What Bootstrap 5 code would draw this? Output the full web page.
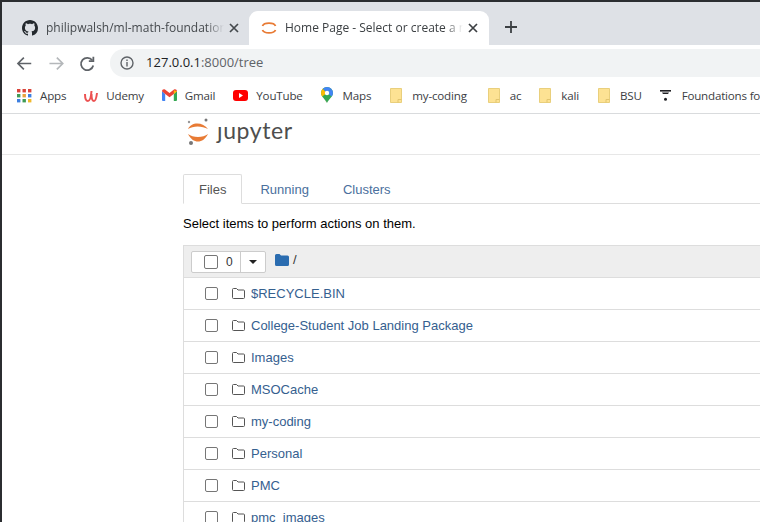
<!DOCTYPE html>
<html lang="en">
<head>
    <meta charset="UTF-8">
    <meta name="viewport" content="width=device-width, initial-scale=1.0">
    <title>Home Page - Select or create a notebook</title>
    <link href="https://cdn.jsdelivr.net/npm/bootstrap@5.3.0/dist/css/bootstrap.min.css" rel="stylesheet">
    <style>
        html, body { height: 522px; overflow: hidden; }
        body {
            background: #fff;
            font-family: "Liberation Sans", Arial, sans-serif;
            border-top: 2px solid #2b2d30;
            border-left: 2px solid #2b2d30;
        }
        .shot { width: 758px; overflow: hidden; }

        /* chrome */
        .ui-font { font-family: "Open Sans", "Noto Sans", sans-serif; }
        .tab-strip { height: 43px; background: #dee1e6; padding: 9px 0 0 1px; }
        .chrome-tab { height: 34px; padding: 0 9px 0 19px; font-size: 12px; color: #45494d; }
        .tab-one { width: 246px; }
        .tab-two { width: 240px; background: #fff; border-radius: 9px 9px 0 0; padding: 0 10px 0 12px; color: #3c4043; }
        .tab-title { flex: 1; min-width: 0; margin-right: -4px; white-space: nowrap; overflow: hidden; -webkit-mask-image: linear-gradient(to right, #000 90%, transparent); mask-image: linear-gradient(to right, #000 90%, transparent); }
        .tab-close { width: 12px; height: 12px; flex: none; }
        .new-tab { width: 14px; height: 14px; margin-left: 15px; margin-top: -2px; }
        .tool-row { height: 33px; padding: 3px 0 0 13px; }
        .tool-btn { width: 19px; height: 19px; }
        .tool-gap { margin-left: 13px; }
        .omni { height: 28px; width: 660px; margin-left: 13px; background: #f1f3f4; border-radius: 14px 0 0 14px; padding-left: 10px; font-size: 13px; color: #202124; }
        .omni-dim { color: #5f6368; }
        .mark-row { height: 36px; padding-left: 15px; font-size: 11.6px; letter-spacing: -.2px; color: #3c4043; border-bottom: 1px solid #d9dbdd; white-space: nowrap; }
        .mark-item { gap: 8px; margin-right: 18px; }
        .mark-item svg { flex: none; }
        .mark-wide { gap: 10px; }
        .mark-end { margin-right: 19px; }
        .mark-far { margin-right: 21px; }
        .mark-last { gap: 11px; margin-right: 0; }

        /* jupyter page */
        .jup-head { height: 41px; padding-left: 181px; border-bottom: 1px solid #e7e7e7; }
        .jup-logo { margin-top: -2px; flex: none; }
        .jup-word { font-family: "Lato", "Open Sans", sans-serif; font-size: 23px; letter-spacing: .6px; color: #4e4e4e; line-height: 1; margin-left: 8px; margin-top: -7px; }
        .jup-body { margin-left: 181px; padding-top: 19px; width: 700px; font-size: 13px; color: #000; }
        .jup-tabs { border-bottom: 1px solid #ddd; height: 30px; --bs-nav-tabs-border-color: #ddd; --bs-nav-tabs-border-radius: 2px; }
        .jup-tabs .nav-link { font-size: 13px; line-height: 20px; padding: 5px 12px 4px; margin-right: 8px; color: #4a6f9d; height: 30px; }
        .jup-tabs .nav-link.active { color: #555; border-color: #ddd #ddd #fff; padding: 5px 15px 4px; margin-right: 4px; }
        .jup-tabs .nav-item:nth-child(2) .nav-link { padding-left: 13px; }
        .hint { font-size: 13px; line-height: 20px; margin: 10px 0 0; }
        .file-list { margin-top: 11px; border: 1px solid #ddd; border-right: 0; border-bottom: 0; --bs-list-group-border-radius: 0; }
        .list-top { height: 32px; background: #eee; border-bottom: 1px solid #ddd; padding-left: 7px; color: #333; font-size: 12px; }
        .count-btn { height: 22px; background: #fff; border: 1px solid #ccc; border-radius: 2px; display: flex; align-items: center; }
        .count-left { width: 49px; padding-left: 12px; gap: 8px; border-right: 1px solid #ccc; height: 100%; }
        .count-right { width: 24px; height: 100%; justify-content: center; }
        .caret-down { width: 0; height: 0; border-left: 4px solid transparent; border-right: 4px solid transparent; border-top: 4px solid #222; }
        .tick { width: 13px; height: 13px; border: 1px solid #767676; border-radius: 2px; background: #fff; flex: none; }
        .count-left .tick { width: 14px; height: 14px; }
        .root-crumb { margin-left: 9px; gap: 4px; margin-top: -3px; font-size: 13px; }
        .file-row { height: 32px; padding: 0 0 0 21px; border-bottom: 1px solid #ddd; }
        .file-row a { color: #35608f; font-size: 13px; text-decoration: none; margin-left: 6px; }
        .file-row svg { margin-left: 14px; flex: none; }
    </style>
</head>
<body>
<div class="shot">
    <div class="tab-strip d-flex ui-font">
        <div class="chrome-tab tab-one d-flex align-items-center gap-2">
            <svg width="16" height="16" viewBox="0 0 16 16" fill="#24292e"><path d="M8 0C3.58 0 0 3.58 0 8c0 3.54 2.29 6.53 5.47 7.59.4.07.55-.17.55-.38 0-.19-.01-.82-.01-1.49-2.01.37-2.53-.49-2.69-.94-.09-.23-.48-.94-.82-1.13-.28-.15-.68-.52-.01-.53.63-.01 1.08.58 1.23.82.72 1.21 1.87.87 2.33.66.07-.52.28-.87.51-1.07-1.78-.2-3.64-.89-3.64-3.95 0-.87.31-1.59.82-2.15-.08-.2-.36-1.02.08-2.12 0 0 .67-.21 2.2.82.64-.18 1.32-.27 2-.27s1.36.09 2 .27c1.53-1.04 2.2-.82 2.2-.82.44 1.1.16 1.92.08 2.12.51.56.82 1.27.82 2.15 0 3.07-1.87 3.75-3.65 3.95.29.25.54.73.54 1.48 0 1.07-.01 1.93-.01 2.2 0 .21.15.46.55.38A8.01 8.01 0 0 0 16 8c0-4.42-3.58-8-8-8z"/></svg>
            <span class="tab-title">philipwalsh/ml-math-foundations</span>
            <svg class="tab-close" viewBox="0 0 12 12" stroke="#45494d" stroke-width="1.7" fill="none"><path d="M2 2l8 8M10 2l-8 8"/></svg>
        </div>
        <div class="chrome-tab tab-two d-flex align-items-center gap-2">
            <svg width="16" height="18" viewBox="0 0 16 18" fill="none" stroke="#e87b35" stroke-width="1.8"><path d="M1.5 7C3 3.2 13 3.2 14.5 7M1.5 11C3 14.8 13 14.8 14.5 11"/></svg>
            <span class="tab-title">Home Page - Select or create a notebook</span>
            <svg class="tab-close" viewBox="0 0 12 12" stroke="#3c4043" stroke-width="1.7" fill="none"><path d="M2 2l8 8M10 2l-8 8"/></svg>
        </div>
        <svg class="new-tab align-self-center" viewBox="0 0 14 14" stroke="#3c4043" stroke-width="1.8" fill="none"><path d="M7 1v12M1 7h12"/></svg>
    </div>

    <div class="tool-row d-flex align-items-center ui-font">
        <svg class="tool-btn" viewBox="0 0 19 19" fill="none" stroke="#5f6368" stroke-width="1.7"><path d="M16.5 9.5H3M9 3.5l-6 6 6 6"/></svg>
        <svg class="tool-btn tool-gap" viewBox="0 0 19 19" fill="none" stroke="#b4b7ba" stroke-width="1.7"><path d="M2.5 9.5H16M10 3.5l6 6-6 6"/></svg>
        <svg class="tool-btn tool-gap" viewBox="0 0 19 19" fill="none" stroke="#5f6368" stroke-width="1.8"><path d="M15.5 11.5a6.3 6.3 0 1 1-1-5.2"/><path d="M15.6 2.6v4.6H11" /></svg>
        <div class="omni d-flex align-items-center">
            <svg width="14" height="14" viewBox="0 0 14 14" fill="none" stroke="#5f6368" stroke-width="1.4" class="me-2"><circle cx="7" cy="7" r="6"/><path d="M7 6v4.4M7 3.4v1.5"/></svg>
            <span class="ms-1">127.0.0.1<span class="omni-dim">:8000/tree</span></span>
        </div>
    </div>

    <div class="mark-row d-flex align-items-center ui-font">
        <div class="mark-item d-flex align-items-center">
            <svg width="15" height="15" viewBox="0 0 15 15"><g fill="#d9443a"><rect x="0" y="1" width="3.4" height="3.4"/><rect x="5.5" y="1" width="3.4" height="3.4"/><rect x="11" y="1" width="3.4" height="3.4"/></g><rect x="0" y="6" width="3.4" height="3.4" fill="#3f9b55"/><rect x="5.5" y="6" width="3.4" height="3.4" fill="#e8a33c"/><rect x="11" y="6" width="3.4" height="3.4" fill="#3d7fe0"/><rect x="0" y="11" width="3.4" height="3.4" fill="#3d7fe0"/><rect x="5.5" y="11" width="3.4" height="3.4" fill="#3f9b55"/><rect x="11" y="11" width="3.4" height="3.4" fill="#f1b82c"/></svg>
            <span>Apps</span>
        </div>
        <div class="mark-item d-flex align-items-center">
            <svg width="14" height="14" viewBox="0 0 14 14" fill="none" stroke="#ec5252" stroke-width="2"><path d="M1 6c0 4 1 7 3 7s3-4 3.5-10M7.5 6c0 4 1 7 2.500 7S12.500 9 13 5"/></svg>
            <span>Udemy</span>
        </div>
        <div class="mark-item d-flex align-items-center">
            <svg width="15" height="12" viewBox="0 0 15 12"><path d="M0 2v9a1 1 0 0 0 1 1h2.200V5z" fill="#4285f4"/><path d="M15 2v9a1 1 0 0 1-1 1h-2.200V5z" fill="#34a853"/><path d="M0 2.200C0 .5 1.800-.4 3 .6L7.500 4 12 .6c1.200-1 3-.1 3 1.600L11.800 5 7.500 8.200 3.200 5z" fill="#ea4335"/><path d="M11.800 1.300 15 2.200 11.800 5z" fill="#fbbc04"/></svg>
            <span>Gmail</span>
        </div>
        <div class="mark-item d-flex align-items-center">
            <svg width="15" height="11" viewBox="0 0 15 11"><rect width="15" height="11" rx="3" fill="#f00"/><path d="M6 3v5l4-2.500z" fill="#fff"/></svg>
            <span>YouTube</span>
        </div>
        <div class="mark-item mark-wide mark-end d-flex align-items-center">
            <svg width="12" height="16" viewBox="0 0 12 16"><path d="M6 0a6 6 0 0 1 6 6c0 3.500-4 6-6 10-2-4-6-6.500-6-10a6 6 0 0 1 6-6z" fill="#34a853"/><path d="M1.800 1.800 6 6 1.200 9.600C.4 8.400 0 7.200 0 6a6 6 0 0 1 1.800-4.200z" fill="#fbbc04"/><path d="M1.800 1.800A6 6 0 0 1 6 0c1.800 0 3.400.8 4.500 2L6 6z" fill="#4285f4"/><path d="M10.500 2A6 6 0 0 1 12 6c0 1.200-.5 2.300-1.200 3.400L6 6z" fill="#4285f4"/><circle cx="6" cy="6" r="2.200" fill="#fff"/><path d="M1.200 9.600 6 16c-1-2-3.200-3.900-4.800-6.400z" fill="#ea4335"/></svg>
            <span>Maps</span>
        </div>
        <div class="mark-item mark-wide mark-far d-flex align-items-center">
            <svg width="12" height="15" viewBox="0 0 12 15"><path d="M.5.500h11v14H.500z" fill="#fde293" stroke="#e9cf7c"/><path d="M8 14.500v-3h3.500" fill="none" stroke="#e2c56f"/></svg>
            <span>my-coding</span>
        </div>
        <div class="mark-item mark-wide d-flex align-items-center">
            <svg width="12" height="15" viewBox="0 0 12 15"><path d="M.5.500h11v14H.500z" fill="#fde293" stroke="#e9cf7c"/><path d="M8 14.500v-3h3.500" fill="none" stroke="#e2c56f"/></svg>
            <span>ac</span>
        </div>
        <div class="mark-item mark-wide mark-end d-flex align-items-center">
            <svg width="12" height="15" viewBox="0 0 12 15"><path d="M.5.500h11v14H.500z" fill="#fde293" stroke="#e9cf7c"/><path d="M8 14.500v-3h3.500" fill="none" stroke="#e2c56f"/></svg>
            <span>kali</span>
        </div>
        <div class="mark-item mark-wide d-flex align-items-center">
            <svg width="12" height="15" viewBox="0 0 12 15"><path d="M.5.500h11v14H.500z" fill="#fde293" stroke="#e9cf7c"/><path d="M8 14.500v-3h3.500" fill="none" stroke="#e2c56f"/></svg>
            <span>BSU</span>
        </div>
        <div class="mark-item mark-last d-flex align-items-center">
            <svg width="11" height="11" viewBox="0 0 11 11" fill="#202124"><rect x="0" y="0" width="11" height="1.600"/><path d="M2 2.500h7L8 4H3z"/><circle cx="5.500" cy="9.300" r="1.500"/></svg>
            <span>Foundations for</span>
        </div>
    </div>

    <div class="jup-head d-flex align-items-center">
        <svg class="jup-logo" width="26" height="30" viewBox="0 0 26 30" fill="none">
            <path d="M5 11C8 3.500 20 3.500 25 11C19 7.500 10 7.500 5 11z" fill="#e87b35"/>
            <path d="M5 16C10 20 20 20 25 16C20 26 10 26 5 16z" fill="#e87b35"/>
            <circle cx="23" cy="2" r="1.500" fill="#767677"/>
            <circle cx="6" cy="4" r="1.200" fill="#989798"/>
            <circle cx="8" cy="25" r="2" fill="#767677"/>
        </svg>
        <span class="jup-word">ȷupyter</span>
    </div>

    <div class="jup-body">
        <ul class="nav nav-tabs jup-tabs">
            <li class="nav-item"><a class="nav-link active" href="#">Files</a></li>
            <li class="nav-item"><a class="nav-link" href="#">Running</a></li>
            <li class="nav-item"><a class="nav-link" href="#">Clusters</a></li>
        </ul>
        <p class="hint">Select items to perform actions on them.</p>
        <div class="file-list list-group">
            <div class="list-top d-flex align-items-center">
                <div class="count-btn">
                    <span class="count-left d-flex align-items-center"><span class="tick"></span>0</span>
                    <span class="count-right d-flex align-items-center"><span class="caret-down"></span></span>
                </div>
                <div class="root-crumb d-flex align-items-center">
                    <svg width="14" height="12" viewBox="0 0 14 12" fill="#2a6cb0"><path d="M0 1.500A1.500 1.500 0 0 1 1.500 0h3L6 1.500h6.500A1.500 1.500 0 0 1 14 3v7.500a1.500 1.500 0 0 1-1.500 1.500h-11A1.500 1.500 0 0 1 0 10.500z"/></svg>
                    <span>/</span>
                </div>
            </div>
            <div class="file-row d-flex align-items-center"><span class="tick"></span><svg width="13" height="11" viewBox="0 0 13 11" fill="none" stroke="#555" stroke-width="1"><path d="M.5 2V1.500a1 1 0 0 1 1-1h3l1.500 1.500h5.500a1 1 0 0 1 1 1v6.500a1 1 0 0 1-1 1h-10a1 1 0 0 1-1-1z"/></svg><a href="#">$RECYCLE.BIN</a></div>
            <div class="file-row d-flex align-items-center"><span class="tick"></span><svg width="13" height="11" viewBox="0 0 13 11" fill="none" stroke="#555" stroke-width="1"><path d="M.5 2V1.500a1 1 0 0 1 1-1h3l1.500 1.500h5.500a1 1 0 0 1 1 1v6.500a1 1 0 0 1-1 1h-10a1 1 0 0 1-1-1z"/></svg><a href="#">College-Student Job Landing Package</a></div>
            <div class="file-row d-flex align-items-center"><span class="tick"></span><svg width="13" height="11" viewBox="0 0 13 11" fill="none" stroke="#555" stroke-width="1"><path d="M.5 2V1.500a1 1 0 0 1 1-1h3l1.500 1.500h5.500a1 1 0 0 1 1 1v6.500a1 1 0 0 1-1 1h-10a1 1 0 0 1-1-1z"/></svg><a href="#">Images</a></div>
            <div class="file-row d-flex align-items-center"><span class="tick"></span><svg width="13" height="11" viewBox="0 0 13 11" fill="none" stroke="#555" stroke-width="1"><path d="M.5 2V1.500a1 1 0 0 1 1-1h3l1.500 1.500h5.500a1 1 0 0 1 1 1v6.500a1 1 0 0 1-1 1h-10a1 1 0 0 1-1-1z"/></svg><a href="#">MSOCache</a></div>
            <div class="file-row d-flex align-items-center"><span class="tick"></span><svg width="13" height="11" viewBox="0 0 13 11" fill="none" stroke="#555" stroke-width="1"><path d="M.5 2V1.500a1 1 0 0 1 1-1h3l1.500 1.500h5.500a1 1 0 0 1 1 1v6.500a1 1 0 0 1-1 1h-10a1 1 0 0 1-1-1z"/></svg><a href="#">my-coding</a></div>
            <div class="file-row d-flex align-items-center"><span class="tick"></span><svg width="13" height="11" viewBox="0 0 13 11" fill="none" stroke="#555" stroke-width="1"><path d="M.5 2V1.500a1 1 0 0 1 1-1h3l1.500 1.500h5.500a1 1 0 0 1 1 1v6.500a1 1 0 0 1-1 1h-10a1 1 0 0 1-1-1z"/></svg><a href="#">Personal</a></div>
            <div class="file-row d-flex align-items-center"><span class="tick"></span><svg width="13" height="11" viewBox="0 0 13 11" fill="none" stroke="#555" stroke-width="1"><path d="M.5 2V1.500a1 1 0 0 1 1-1h3l1.500 1.500h5.500a1 1 0 0 1 1 1v6.500a1 1 0 0 1-1 1h-10a1 1 0 0 1-1-1z"/></svg><a href="#">PMC</a></div>
            <div class="file-row d-flex align-items-center"><span class="tick"></span><svg width="13" height="11" viewBox="0 0 13 11" fill="none" stroke="#555" stroke-width="1"><path d="M.5 2V1.500a1 1 0 0 1 1-1h3l1.500 1.500h5.500a1 1 0 0 1 1 1v6.500a1 1 0 0 1-1 1h-10a1 1 0 0 1-1-1z"/></svg><a href="#">pmc_images</a></div>
        </div>
    </div>
</div>
<script src="https://cdn.jsdelivr.net/npm/bootstrap@5.3.0/dist/js/bootstrap.bundle.min.js"></script>
</body>
</html>
